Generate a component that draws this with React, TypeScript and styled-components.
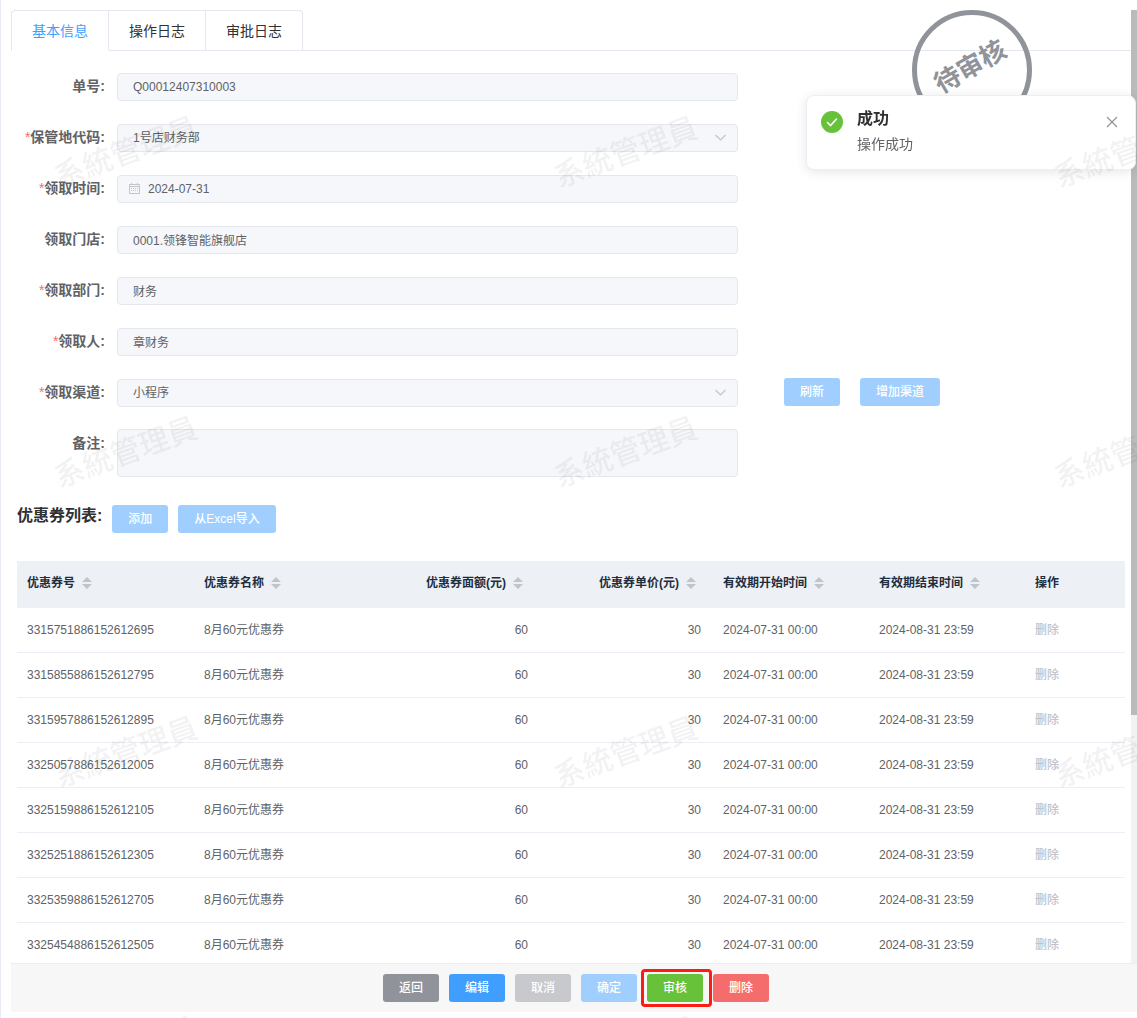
import React from "react";
import styled, { createGlobalStyle, css } from "styled-components";

const GlobalStyle = createGlobalStyle`
  *, *::before, *::after { box-sizing: border-box; }
  body {
    margin: 0;
    background: #fff;
    color: #606266;
    font-family: "Liberation Sans", "Noto Sans CJK SC", sans-serif;
    font-size: 14px;
  }
  button, input, select, textarea { font-family: inherit; }
`;

const Page = styled.div`
  display: flex;
  flex-direction: column;
  height: 100vh;
  padding: 10px 0 6px 10px;
  border-left: 1px solid #e8eaf5;
  overflow: hidden;
`;

const Viewport = styled.div`
  display: flex;
  flex: 1;
  min-height: 0;
`;

const Panel = styled.main`
  position: relative;
  flex: 1;
  min-width: 0;
  overflow-y: auto;
  scrollbar-width: none;
`;

const ScrollTrack = styled.div`
  width: 6px;
  background: #f2f2f2;
`;

const ScrollThumb = styled.div`
  height: 74%;
  background: #bababa;
`;

const TabBar = styled.nav`
  display: flex;
  border-bottom: 1px solid #e4e7ed;
`;

const Tab = styled.button<{ $active?: boolean }>`
  height: 41px;
  margin-bottom: -1px;
  padding: 0 20px;
  border: 1px solid #e4e7ed;
  border-left-width: 0;
  border-bottom-color: ${(p) => (p.$active ? "#fff" : "#e4e7ed")};
  background: #fff;
  color: ${(p) => (p.$active ? "#409eff" : "#303133")};
  font-size: 14px;
  line-height: 38px;
  &:first-child {
    border-left-width: 1px;
    border-top-left-radius: 4px;
  }
  &:last-child { border-top-right-radius: 4px; }
`;

const Stamp = styled.div`
  position: absolute;
  top: 0;
  right: 99px;
  display: flex;
  align-items: center;
  justify-content: center;
  width: 120px;
  height: 120px;
  padding-bottom: 12px;
  padding-right: 6px;
  border: 5px solid #909399;
  border-radius: 50%;
  color: #909399;
  font-size: 26px;
  font-weight: 700;
`;

const StampText = styled.span`
  transform: rotate(-30deg);
`;

const Form = styled.form`
  display: grid;
  row-gap: 22px;
  padding-top: 21px;
`;

const FormRow = styled.div`
  display: grid;
  grid-template-columns: 106px minmax(0, 621fr) 393fr;
  align-items: start;
`;

const Label = styled.label`
  padding-right: 12px;
  font-weight: 700;
  line-height: 28px;
  text-align: right;
  white-space: nowrap;
`;

const Star = styled.span`
  color: #f56c6c;
  font-weight: 400;
`;

const Control = styled.div`
  position: relative;
  display: flex;
  padding-top: 1px;
`;

const fieldStyle = css`
  width: 100%;
  height: 28px;
  margin: 0;
  padding: 0 15px;
  border: 1px solid #e4e7ed;
  border-radius: 4px;
  outline: none;
  background: #f5f7fa;
  color: #606266;
  font-size: 12px;
  line-height: 26px;
  opacity: 1;
`;

const TextInput = styled.input<{ $icon?: boolean }>`
  ${fieldStyle}
  padding-left: ${(p) => (p.$icon ? 30 : 15)}px;
  padding-bottom: ${(p) => (p.$icon ? 0 : 1)}px;
`;

const Select = styled.select`
  ${fieldStyle}
  appearance: none;
`;

const RemarkControl = styled.div`
  display: flex;
`;

const TextArea = styled.textarea`
  ${fieldStyle}
  height: 48px;
  padding: 5px 15px;
  line-height: 18px;
  resize: none;
`;

const LeadIcon = styled.svg`
  position: absolute;
  top: 8px;
  left: 11px;
`;

const TailIcon = styled.svg`
  position: absolute;
  top: 8px;
  right: 11px;
`;

const SideActions = styled.div`
  display: flex;
  gap: 20px;
  padding-left: 46px;
`;

const tones = {
  info: "#909399",
  primary: "#409eff",
  infoOff: "#c8c9cc",
  primaryOff: "#a0cfff",
  success: "#67c23a",
  danger: "#f56c6c",
};

const Button = styled.button<{ $tone: keyof typeof tones }>`
  height: 28px;
  padding: 0 16px;
  border: 0;
  border-radius: 3px;
  background: ${(p) => tones[p.$tone]};
  color: #fff;
  font-size: 12px;
  font-weight: 500;
  line-height: 28px;
  white-space: nowrap;
`;

const ListSection = styled.section`
  padding: 27px 6px 0;
`;

const ListHeader = styled.header`
  display: flex;
  align-items: flex-start;
  gap: 10px;
  padding-bottom: 28px;
`;

const ListTitle = styled.h2`
  margin: 0;
  color: #303133;
  font-size: 16px;
  font-weight: 700;
  line-height: 24px;
`;

const ListActions = styled.div`
  display: flex;
  gap: 10px;
  padding-top: 1px;
`;

const Table = styled.table`
  width: 100%;
  table-layout: fixed;
  border-collapse: separate;
  border-spacing: 0;
  font-size: 12px;
  line-height: 20px;
  white-space: nowrap;
`;

const Col = styled.col<{ $share: number }>`
  width: ${(p) => (p.$share / 1108) * 100}%;
`;

const HeadCell = styled.th<{ $right?: boolean }>`
  height: 47px;
  padding: 0 10px 2px;
  border-bottom: 1px solid #ebeef5;
  background: #edf1f6;
  color: #1f2d3d;
  font-weight: 700;
  text-align: ${(p) => (p.$right ? "right" : "left")};
`;

const HeadLabel = styled.span`
  display: inline-flex;
  align-items: center;
  vertical-align: top;
`;

const SortIcon = styled.svg`
  width: 24px;
  height: 14px;
`;

const Cell = styled.td<{ $right?: boolean }>`
  height: 45px;
  padding: 0 ${(p) => (p.$right ? 12 : 10)}px 0 10px;
  border-bottom: 1px solid #ebeef5;
  text-align: ${(p) => (p.$right ? "right" : "left")};
`;

const TextButton = styled.button`
  padding: 0;
  border: 0;
  background: none;
  color: #c0c4cc;
  font-size: 12px;
  font-weight: 500;
  line-height: 20px;
`;

const Footer = styled.footer`
  display: flex;
  justify-content: center;
  gap: 10px;
  padding: 10px 0 10px 4px;
  border-top: 1px solid #ececec;
  background: #f7f7f7;
`;

const Marked = styled.div`
  position: relative;
  display: flex;
  &::after {
    content: "";
    position: absolute;
    inset: -5px -9px -5px -6px;
    border: 3px solid #fd1c12;
    border-radius: 4px;
    pointer-events: none;
  }
`;

const Toast = styled.div`
  position: fixed;
  top: 95px;
  right: 1px;
  display: flex;
  align-items: flex-start;
  gap: 13px;
  width: 330px;
  padding: 11px 17px 14px 13px;
  border: 1px solid #ebeef5;
  border-radius: 8px;
  background: #fff;
  box-shadow: 0 2px 12px rgba(0, 0, 0, 0.1);
`;

const ToastIcon = styled.svg`
  flex: none;
  margin-top: 3px;
`;

const ToastBody = styled.div`
  flex: 1;
`;

const ToastTitle = styled.h3`
  margin: 0;
  color: #303133;
  font-size: 16px;
  font-weight: 700;
  line-height: 24px;
`;

const ToastText = styled.p`
  margin: 3px 0 0;
  line-height: 21px;
`;

const CloseButton = styled.button`
  display: flex;
  margin-top: 9px;
  padding: 0;
  border: 0;
  background: none;
`;

const WatermarkLayer = styled.div`
  position: fixed;
  inset: 0;
  display: grid;
  grid-template-columns: repeat(3, 500px);
  grid-auto-rows: 300px;
  overflow: hidden;
  pointer-events: none;
`;

const WatermarkTile = styled.div`
  display: flex;
  align-items: center;
  justify-content: center;
  width: 250px;
  color: rgba(0, 0, 0, 0.05);
  font-family: "Noto Sans CJK TC", sans-serif;
  font-size: 30px;
  font-weight: 500;
  line-height: 40px;
  white-space: nowrap;
`;

const WatermarkText = styled.span`
  transform: rotate(-20deg);
`;

const Chevron = () => (
  <TailIcon width="13" height="13" viewBox="0 0 13 13" fill="none" stroke="#c0c4cc" aria-hidden="true">
    <path d="M1.5 4l5 5 5-5" strokeWidth="1.2" />
  </TailIcon>
);

const Sort = () => (
  <SortIcon viewBox="0 0 24 14" fill="#c0c4cc" aria-hidden="true">
    <path d="M7 6l5-5 5 5zM7 8l5 5 5-5z" />
  </SortIcon>
);

type Field = {
  id: string;
  label: string;
  value: string;
  required?: boolean;
  kind?: "select" | "date";
};

const fields: Field[] = [
  { id: "orderNo", label: "单号", value: "Q00012407310003" },
  { id: "custody", label: "保管地代码", value: "1号店财务部", required: true, kind: "select" },
  { id: "date", label: "领取时间", value: "2024-07-31", required: true, kind: "date" },
  { id: "store", label: "领取门店", value: "0001.领锋智能旗舰店" },
  { id: "dept", label: "领取部门", value: "财务", required: true },
  { id: "person", label: "领取人", value: "章财务", required: true },
  { id: "channel", label: "领取渠道", value: "小程序", required: true, kind: "select" },
];

const columns = [
  { title: "优惠券号", share: 177, sort: true },
  { title: "优惠券名称", share: 173, sort: true },
  { title: "优惠券面额(元)", share: 173, sort: true, right: true },
  { title: "优惠券单价(元)", share: 173, sort: true, right: true },
  { title: "有效期开始时间", share: 156, sort: true },
  { title: "有效期结束时间", share: 156, sort: true },
  { title: "操作", share: 100 },
];

const coupons = [
  "3315751886152612695",
  "3315855886152612795",
  "3315957886152612895",
  "3325057886152612005",
  "3325159886152612105",
  "3325251886152612305",
  "3325359886152612705",
  "3325454886152612505",
];

function FieldControl({ field }: { field: Field }) {
  if (field.kind === "select") {
    return (
      <Control>
        <Select id={field.id} disabled defaultValue={field.value}>
          <option>{field.value}</option>
        </Select>
        <Chevron />
      </Control>
    );
  }
  const isDate = field.kind === "date";
  return (
    <Control>
      <TextInput id={field.id} type="text" disabled defaultValue={field.value} $icon={isDate} />
      {isDate && (
        <LeadIcon width="13" height="13" viewBox="0 0 13 13" fill="none" stroke="#c0c4cc" aria-hidden="true">
          <path d="M1.5 2.5h10v9h-10zM1.5 4.5h10M3.5 1v2M9.5 1v2" />
          <path d="M3 6.5h7M3 8.5h7" strokeDasharray="1 1" />
        </LeadIcon>
      )}
    </Control>
  );
}

export default function App() {
  return (
    <>
      <GlobalStyle />
      <Page>
        <Viewport>
          <Panel>
            <TabBar>
              <Tab type="button" $active>基本信息</Tab>
              <Tab type="button">操作日志</Tab>
              <Tab type="button">审批日志</Tab>
            </TabBar>
            <Stamp>
              <StampText>待审核</StampText>
            </Stamp>
            <Form>
              {fields.map((f) => (
                <FormRow key={f.id}>
                  <Label htmlFor={f.id}>
                    {f.required && <Star>*</Star>}
                    {f.label}:
                  </Label>
                  <FieldControl field={f} />
                  {f.id === "channel" && (
                    <SideActions>
                      <Button type="button" disabled $tone="primaryOff">刷新</Button>
                      <Button type="button" disabled $tone="primaryOff">增加渠道</Button>
                    </SideActions>
                  )}
                </FormRow>
              ))}
              <FormRow>
                <Label htmlFor="remark">备注:</Label>
                <RemarkControl>
                  <TextArea id="remark" disabled />
                </RemarkControl>
              </FormRow>
            </Form>
            <ListSection>
              <ListHeader>
                <ListTitle>优惠券列表:</ListTitle>
                <ListActions>
                  <Button type="button" disabled $tone="primaryOff">添加</Button>
                  <Button type="button" disabled $tone="primaryOff">从Excel导入</Button>
                </ListActions>
              </ListHeader>
              <Table>
                <colgroup>
                  {columns.map((c) => (
                    <Col key={c.title} $share={c.share} />
                  ))}
                </colgroup>
                <thead>
                  <tr>
                    {columns.map((c) => (
                      <HeadCell key={c.title} scope="col" $right={c.right}>
                        <HeadLabel>
                          {c.title}
                          {c.sort && <Sort />}
                        </HeadLabel>
                      </HeadCell>
                    ))}
                  </tr>
                </thead>
                <tbody>
                  {coupons.map((no) => (
                    <tr key={no}>
                      <Cell>{no}</Cell>
                      <Cell>8月60元优惠券</Cell>
                      <Cell $right>60</Cell>
                      <Cell $right>30</Cell>
                      <Cell>2024-07-31 00:00</Cell>
                      <Cell>2024-08-31 23:59</Cell>
                      <Cell>
                        <TextButton type="button" disabled>删除</TextButton>
                      </Cell>
                    </tr>
                  ))}
                </tbody>
              </Table>
            </ListSection>
          </Panel>
          <ScrollTrack>
            <ScrollThumb />
          </ScrollTrack>
        </Viewport>
        <Footer>
          <Button type="button" $tone="info">返回</Button>
          <Button type="button" $tone="primary">编辑</Button>
          <Button type="button" disabled $tone="infoOff">取消</Button>
          <Button type="button" disabled $tone="primaryOff">确定</Button>
          <Marked>
            <Button type="button" $tone="success">审核</Button>
          </Marked>
          <Button type="button" $tone="danger">删除</Button>
        </Footer>
      </Page>
      <Toast role="alert">
        <ToastIcon width="24" height="24" viewBox="0 0 24 24" aria-hidden="true">
          <circle cx="12" cy="12" r="11" fill="#67c23a" />
          <path d="M7.5 12.5l3 3 6-6.5" fill="none" stroke="#fff" strokeWidth="1.6" strokeLinecap="round" />
        </ToastIcon>
        <ToastBody>
          <ToastTitle>成功</ToastTitle>
          <ToastText>操作成功</ToastText>
        </ToastBody>
        <CloseButton type="button" aria-label="关闭">
          <svg width="12" height="12" viewBox="0 0 12 12" stroke="#909399" strokeWidth="1.2" aria-hidden="true">
            <path d="M1 1l10 10M11 1L1 11" />
          </svg>
        </CloseButton>
      </Toast>
      <WatermarkLayer aria-hidden="true">
        {Array.from({ length: 12 }, (_, i) => (
          <WatermarkTile key={i}>
            <WatermarkText>系統管理員</WatermarkText>
          </WatermarkTile>
        ))}
      </WatermarkLayer>
    </>
  );
}
